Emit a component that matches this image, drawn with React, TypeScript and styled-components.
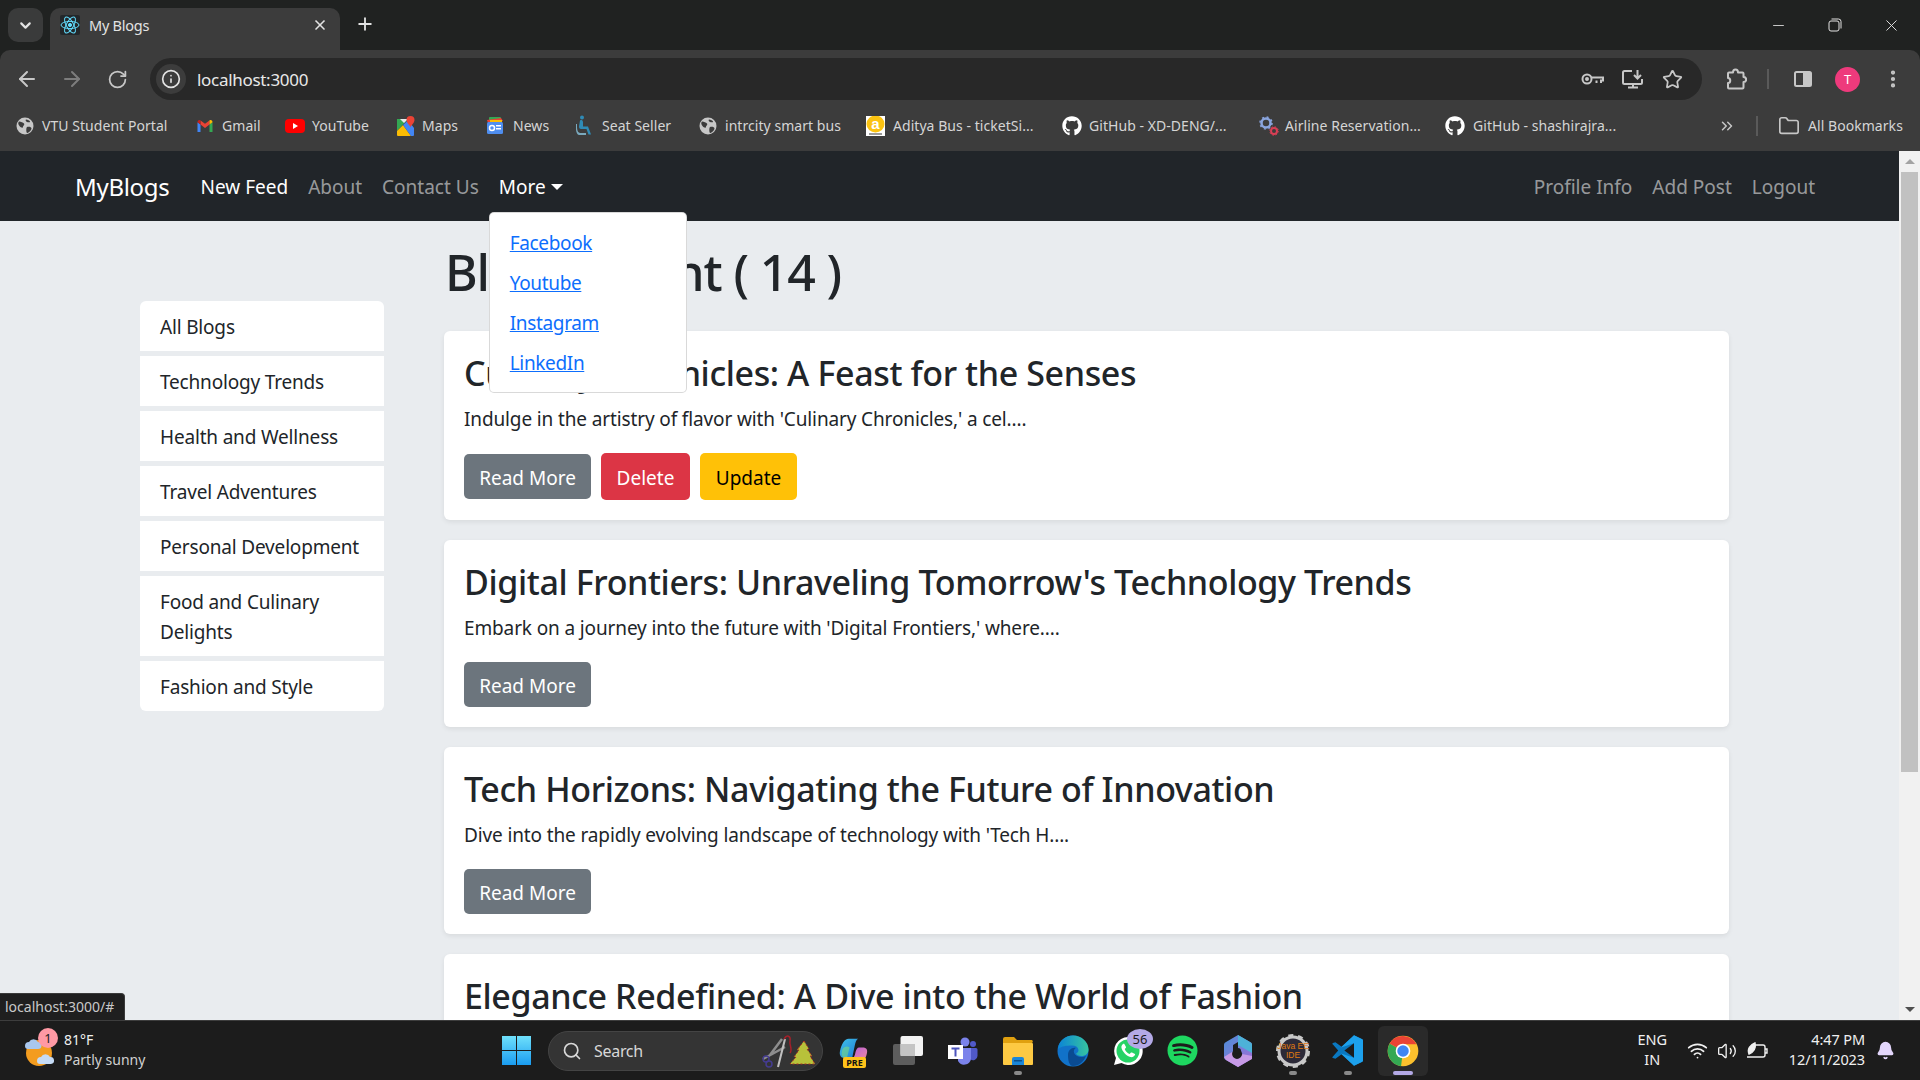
import React from "react";
import styled, { createGlobalStyle } from "styled-components";
import { ArrowLeft, ArrowRight, RotateCw, Info, Star, MoreVertical, ChevronDown, X, Plus, ChevronsRight, Folder, Search, Minus, Wifi, Volume2, Bell } from "lucide-react";
import { FaGithub, FaSpotify } from "react-icons/fa";

const SANS = `"Noto Sans", "Open Sans", sans-serif`;

const Global = createGlobalStyle`
  html, body { margin: 0; padding: 0; height: 100%; overflow: hidden; background: #e9ecef; }
  * { box-sizing: border-box; }
  body { font-family: ${SANS}; }
`;

const Screen = styled.div`
  width: 1920px; height: 1080px; display: flex; flex-direction: column; overflow: hidden; position: relative;
`;

/* ---------- browser chrome ---------- */
const TabStrip = styled.div`
  height: 50px; background: #202221; display: flex; align-items: flex-end; padding-left: 8px; color: #e3e3e3; flex: none;
`;
const TabSearch = styled.div`
  width: 35px; height: 34px; margin-bottom: 8px; border-radius: 10px; background: #3a3b3b; display: flex; align-items: center; justify-content: center; color: #e3e3e3;
`;
const Tab = styled.div`
  width: 290px; height: 42px; margin-left: 7px; background: #3c3c3c; border-radius: 10px 10px 0 0; display: flex; align-items: center; padding: 0 12px 8px 10px; gap: 9px;
`;
const Favicon = styled.div`
  width: 20px; height: 20px; background: #23272a; border-radius: 2px; display: flex; align-items: center; justify-content: center;
`;
const TabTitle = styled.span`
  font-size: 14.5px; letter-spacing: -0.25px; flex: 1; color: #e3e3e3;
`;
const NewTab = styled.div`
  margin: 0 0 16px 15px; width: 20px; height: 20px; display: flex; align-items: center; justify-content: center;
`;
const WindowControls = styled.div`
  margin-left: auto; display: flex; align-self: stretch; align-items: center; padding-right: 1px;
`;
const WindowButton = styled.div<{ $w: number }>`
  width: ${(p) => p.$w}px; height: 24px; display: flex; align-items: center; justify-content: center; color: #e3e3e3;
`;

const Toolbar = styled.div`
  height: 50px; background: #3c3c3c; display: flex; align-items: flex-end; position: relative; flex: none; border-radius: 10px 10px 0 0;
`;
const ToolbarWrap = styled.div`
  background: #202221; flex: none;
`;
const NavIcons = styled.div`
  display: flex; width: 150px; height: 42px; align-items: center; padding-left: 15px; gap: 21px; color: #c7c7c7;
`;
const Reload = styled(RotateCw)`
  margin-left: 2px;
`;
const AddressBar = styled.div`
  width: 1552px; height: 42px; border-radius: 21px; background: #282828; display: flex; align-items: center; padding: 0 19px 0 6px; color: #e3e3e3;
`;
const SiteInfo = styled.div`
  width: 30px; height: 30px; border-radius: 50%; background: #3c3c3c; display: flex; align-items: center; justify-content: center; margin-right: 11px;
`;
const Url = styled.span`
  font-size: 17px; letter-spacing: -0.3px; flex: 1; color: #e8e8e8;
`;
const AddressIcons = styled.div`
  display: flex; align-items: center; gap: 18px; color: #c7c7c7;
`;
const ToolIcons = styled.div`
  display: flex; height: 42px; align-items: center; color: #c7c7c7; padding-left: 23px;
`;
const Divider = styled.div`
  width: 2px; height: 20px; background: #5a5a5a; margin: 0 25px 0 20px;
`;
const Avatar = styled.div`
  width: 25px; height: 25px; border-radius: 50%; background: #ee3a7c; color: #fff; font-size: 13px; display: flex; align-items: center; justify-content: center; margin: 0 22px 0 23px;
`;

const Bookmarks = styled.div`
  height: 51px; background: #3c3c3c; display: flex; align-items: center; padding-left: 16px; flex: none; color: #d5d5d5;
`;
const Bookmark = styled.div<{ $w: number; $gap?: number }>`
  width: ${(p) => p.$w}px; display: flex; align-items: center; gap: ${(p) => p.$gap ?? 6}px; font-size: 14px; letter-spacing: 0.05px; white-space: nowrap; flex: none; color: #d5d5d5;
`;
const BookmarkEnd = styled.div`
  margin-left: auto; display: flex; align-items: center; padding-right: 16px; color: #c7c7c7;
`;
const BookmarkDivider = styled.div`
  width: 2px; height: 20px; background: #5a5a5a; margin: 0 20px 0 20px;
`;
const BookmarkFolder = styled(Folder)`
  margin-right: 8px;
`;

/* ---------- page ---------- */
const Viewport = styled.div`
  flex: 1; display: flex; min-height: 0; position: relative;
`;
const Page = styled.div`
  flex: 1; min-width: 0; overflow: hidden; background: #e9ecef; color: #212529;
`;
const Navbar = styled.nav`
  height: 70px; background: #212529; display: flex; align-items: center; padding: 0 74px 0 75px;
`;
const Brand = styled.a`
  font-size: 24px; color: #fff; margin-right: 21px; letter-spacing: -0.3px;
`;
const NavLink = styled.a<{ $active?: boolean }>`
  font-size: 19px; padding: 2px 10px 0; color: ${(p) => (p.$active ? "#fff" : "rgba(255,255,255,.55)")}; white-space: nowrap; display: flex; align-items: center;
`;
const NavRight = styled.div`
  margin-left: auto; display: flex;
`;
const NavDropdown = styled.div`
  position: relative;
`;
const Caret = styled.span`
  display: inline-block; margin-left: 5px; border-top: 6px solid #fff; border-left: 6px solid transparent; border-right: 6px solid transparent;
`;
const Menu = styled.ul`
  position: absolute; top: 40px; left: 0; width: 198px; height: 181px; margin: 0; padding: 10px 0; list-style: none; background: #fff; border: 1px solid rgba(0,0,0,.15); border-radius: 5px; z-index: 5;
`;
const MenuItem = styled.li`
  padding: 5px 20px; height: 40px; font-size: 19px; line-height: 30px; letter-spacing: -0.35px;
`;
const MenuLink = styled.a`
  color: #0d6efd; text-decoration: underline;
`;
const Main = styled.main`
  display: flex; align-items: flex-start; padding-left: 140px; gap: 60px;
`;
const Sidebar = styled.ul`
  width: 244px; margin: 80px 0 0; padding: 0; list-style: none; display: flex; flex-direction: column; gap: 5px; flex: none;
`;
const SideItem = styled.li`
  background: #fff; padding: 11px 20px 9px; font-size: 19px; line-height: 30px; letter-spacing: -0.18px; color: #212529;
  &:first-child { border-radius: 6px 6px 0 0; }
  &:last-child { border-radius: 0 0 6px 6px; }
`;
const Content = styled.section`
  width: 1285px; flex: none; display: flex; flex-direction: column; gap: 20px;
`;
const Heading = styled.h1`
  margin: 21px 0 9px 1px; font-size: 50px; line-height: 60px; font-weight: 500; letter-spacing: -1.15px; color: #212529;
`;
const Card = styled.article`
  background: #fff; border-radius: 6px; padding: 20px; box-shadow: 0 2px 5px rgba(0,0,0,.075); flex: none;
`;
const CardTitle = styled.h3`
  margin: 0 0 9px; padding-top: 1px; font-size: 34px; line-height: 42px; font-weight: 500; letter-spacing: -0.38px; color: #212529;
`;
const CardText = styled.p`
  margin: 0 0 19px; padding-top: 1px; font-size: 19px; line-height: 30px; letter-spacing: -0.13px; color: #212529;
`;
const Actions = styled.div`
  display: flex; align-items: center; gap: 10px;
`;
const Button = styled.button<{ $bg: string; $fg: string; $h?: number; $w: number }>`
  height: ${(p) => p.$h ?? 45}px; width: ${(p) => p.$w}px; padding: 2px 0 0; border: 0; border-radius: 5px; background: ${(p) => p.$bg}; color: ${(p) => p.$fg}; font-family: ${SANS}; font-size: 19px;
`;
const Scrollbar = styled.div`
  width: 21px; background: #f1f1f1; display: flex; flex-direction: column; align-items: center; flex: none;
`;
const ScrollArrow = styled.div`
  height: 21px; display: flex; align-items: center; justify-content: center;
`;
const UpTri = styled.span`
  border-left: 5px solid transparent; border-right: 5px solid transparent; border-bottom: 5px solid #a3a3a3;
`;
const DownTri = styled.span`
  border-left: 5px solid transparent; border-right: 5px solid transparent; border-top: 5px solid #505050;
`;
const Thumb = styled.div`
  width: 17px; height: 600px; background: #c1c1c1;
`;
const Track = styled.div`
  flex: 1;
`;
const StatusBubble = styled.div`
  position: absolute; left: 0; bottom: 0; height: 27px; width: 125px; background: #1f1f1f; border: 1px solid #3a3a3a; border-left: 0; border-bottom: 0; border-radius: 0 4px 0 0; color: #c9c9c9; font-size: 14px; padding: 0 0 2px 5px; display: flex; align-items: center; z-index: 6;
`;

/* ---------- taskbar ---------- */
const Taskbar = styled.footer`
  height: 60px; background: #1c1c1c; border-top: 1px solid #3d3d3d; display: flex; align-items: center; color: #f0f0f0; flex: none; position: relative;
`;
const Weather = styled.div`
  width: 502px; display: flex; align-items: center; padding-left: 24px; gap: 4px; flex: none;
`;
const WeatherIcon = styled.div`
  width: 36px; height: 40px; position: relative; flex: none;
`;
const WeatherBadge = styled.span`
  position: absolute; left: 14px; top: -3px; width: 20px; height: 20px; border-radius: 50%; background: #ff99a4; color: #222; font-size: 13px; display: flex; align-items: center; justify-content: center;
`;
const WeatherText = styled.div`
  font-size: 14px; line-height: 20px; margin-top: -2px;
`;
const WeatherSub = styled.div`
  color: #d0d0d0;
`;
const StartButton = styled.div`
  width: 46px; display: flex; flex: none;
`;
const SearchBox = styled.div`
  width: 275px; height: 40px; border-radius: 20px; background: #343434; border: 1px solid #444; display: flex; align-items: center; padding-left: 13px; gap: 12px; font-size: 16px; letter-spacing: -0.3px; color: #d8d8d8; flex: none; position: relative; overflow: hidden; margin-right: 2px;
`;
const SearchArt = styled.div`
  position: absolute; right: 4px; top: 1px; width: 58px; height: 38px;
`;
const IconSlot = styled.div<{ $active?: boolean }>`
  width: ${(p) => (p.$active ? 50 : 55)}px; margin-left: ${(p) => (p.$active ? 2.5 : 0)}px; height: 50px; display: flex; align-items: center; justify-content: center; position: relative; flex: none; border-radius: 6px;
  background: ${(p) => (p.$active ? "#2a2a2a" : "transparent")};
`;
const Indicator = styled.span<{ $active?: boolean }>`
  position: absolute; bottom: 1px; left: 50%; transform: translateX(-50%); height: 4px; border-radius: 2px; width: ${(p) => (p.$active ? 20 : 8)}px; background: ${(p) => (p.$active ? "#b4a9e6" : "#8a8a8a")};
`;
const PreBadge = styled.span`
  position: absolute; left: 18px; top: 31px; width: 23px; height: 11px; background: #ffc21a; border-radius: 2px; color: #111; font-size: 9px; font-weight: 700; line-height: 11px; text-align: center;
`;
const CountBadge = styled.span`
  position: absolute; right: 2px; top: 3px; width: 26px; height: 20px; border-radius: 50%; background: #b4a9e6; color: #1a1a1a; font-size: 13px; display: flex; align-items: center; justify-content: center;
`;
const Tray = styled.div`
  margin-left: auto; display: flex; align-items: center; padding-right: 25px; font-size: 14.5px; line-height: 20px;
`;
const TrayText = styled.div`
  text-align: center; margin: -3px 20px 0 0; letter-spacing: -0.1px;
`;
const TrayIcons = styled.div`
  display: flex; align-items: center; gap: 9px; margin-right: 21px;
`;
const Clock = styled.div`
  text-align: right; margin: -3px 11px 0 0; letter-spacing: -0.1px;
`;

/* ---------- drawings ---------- */
const Globe = () => (
  <svg width="18" height="18" viewBox="0 0 18 18"><circle cx="9" cy="9" r="8.5" fill="#c7c7c7" /><path d="M3 4.5c2 .5 4 .5 5 2s-1 2-1 3.5-2.5.5-3.5-1S1.500 6 3 4.500zM11 10c2-.5 4.500 0 4.500 1.500S13 15.500 11.500 16 10 11 11 10zM10 2.500c2 0 3.500 1 4 2s-2 1-3 .5-2-2-1-2.500z" fill="#3c3c3c" /></svg>
);
const Gmail = () => (
  <svg width="20" height="18" viewBox="0 0 24 24"><path d="M2 20V7l4 3v10z" fill="#4285f4" /><path d="M22 20V7l-4 3v10z" fill="#34a853" /><path d="M6 10V4.500l6 4.500 6-4.500V10l-6 4.500z" fill="#ea4335" /><path d="M2 7c0-2.500 2.500-3.500 4-2.500V10z" fill="#c5221f" /><path d="M22 7c0-2.500-2.500-3.500-4-2.500V10z" fill="#fbbc04" /></svg>
);
const YouTube = () => (
  <svg width="20" height="18" viewBox="0 0 20 18"><rect y="2" width="20" height="14" rx="4" fill="#f00" /><path d="M8 6l5 3-5 3z" fill="#fff" /></svg>
);
const Maps = () => (
  <svg width="18" height="20" viewBox="0 0 18 20"><path d="M0 3h11L0 15z" fill="#34a853" /><path d="M0 15L6 9l8 11H1a1 1 0 0 1-1-1z" fill="#fbbc04" /><path d="M6 9l5-5 6 8v7a1 1 0 0 1-1 1h-2z" fill="#4285f4" /><path d="M3 3h8L7 7z" fill="#e8eaed" /><path d="M13.500 0a4 4 0 0 1 4 4c0 3-4 6-4 7.500 0-1.500-4-4.500-4-7.500a4 4 0 0 1 4-4z" fill="#ea4335" /></svg>
);
const News = () => (
  <svg width="18" height="18" viewBox="0 0 18 18"><rect x="3" y="0" width="12" height="8" rx="1" fill="#34a853" /><path d="M1 3l14-2 2 3-15 2z" fill="#ea4335" /><path d="M4 3h12v4H4z" fill="#fbbc04" /><rect x="1" y="5" width="16" height="12" rx="1.500" fill="#4f8ef0" /><rect x="10" y="8" width="5" height="1.500" fill="#fff" /><rect x="10" y="11" width="5" height="1.500" fill="#fff" /><circle cx="6" cy="11" r="2.500" fill="none" stroke="#fff" strokeWidth="1.500" /></svg>
);
const SeatSeller = () => (
  <svg width="18" height="22" viewBox="0 0 18 22"><circle cx="6" cy="2.500" r="2" fill="#2f8bb6" /><path d="M4 5.500c2-1 3 0 3 2v4h5l3 8h-2.500l-2-5.500H5c-1.500 0-2-1-2-2.500z" fill="#2f8bb6" /><path d="M1 9c0 5 0 8 3 9h6v2H3C0 19-.5 14 0 9z" fill="#7aa9bd" /></svg>
);
const Aditya = () => (
  <svg width="19" height="20" viewBox="0 0 19 20"><rect width="19" height="20" fill="#fff" /><ellipse cx="9.500" cy="8" rx="9" ry="8.500" fill="#fbc312" /><text x="9.500" y="13" fontSize="15" fontWeight="700" textAnchor="middle" fill="#fff" fontFamily="Liberation Sans, sans-serif">a</text><rect x="3" y="17" width="13" height="2" fill="#999" /></svg>
);
const Gears = () => (
  <svg width="20" height="20" viewBox="0 0 20 20"><circle cx="7" cy="7" r="4.500" fill="none" stroke="#8aa5de" strokeWidth="2.500" /><circle cx="7" cy="7" r="6" fill="none" stroke="#8aa5de" strokeWidth="1.500" strokeDasharray="2 2.700" /><circle cx="15" cy="15" r="3" fill="none" stroke="#d93f55" strokeWidth="2" /><circle cx="15" cy="15" r="4.300" fill="none" stroke="#d93f55" strokeWidth="1" strokeDasharray="1.500 1.900" /></svg>
);
const Atom = () => (
  <svg width="20" height="20" viewBox="0 0 20 20" fill="none" stroke="#61dafb" strokeWidth="1"><ellipse cx="10" cy="10" rx="9" ry="3.600" /><ellipse cx="10" cy="10" rx="9" ry="3.600" transform="rotate(60 10 10)" /><ellipse cx="10" cy="10" rx="9" ry="3.600" transform="rotate(120 10 10)" /><circle cx="10" cy="10" r="1.600" fill="#61dafb" /></svg>
);
const KeyIcon = () => (
  <svg width="24" height="20" viewBox="0 0 24 20" fill="none" stroke="currentColor" strokeWidth="2"><circle cx="7" cy="10" r="4.500" /><circle cx="7" cy="10" r="1" fill="currentColor" /><path d="M11.500 8.500H23v3h-2v2.500M16.500 11.500V14" /></svg>
);
const InstallIcon = () => (
  <svg width="22" height="20" viewBox="0 0 22 20" fill="none" stroke="currentColor" strokeWidth="2"><path d="M10 2H2.500A1.500 1.500 0 0 0 1 3.500v10A1.500 1.500 0 0 0 2.500 15h16a1.500 1.500 0 0 0 1.500-1.500V10M6 18.500h10M11 15v3" /><path d="M15.500 1v8M12 6l3.500 3.500L19 6" /></svg>
);
const PuzzleIcon = () => (
  <svg width="22" height="22" viewBox="0 0 22 22" fill="none" stroke="currentColor" strokeWidth="2" strokeLinejoin="round"><path d="M8 4.500c0-4 5-4 5 0h4.500a1 1 0 0 1 1 1V9c3.500 0 3.500 5 0 5v5.500a1 1 0 0 1-1 1H4a1 1 0 0 1-1-1V15c3 0 3-5 0-5V5.500a1 1 0 0 1 1-1z" /></svg>
);
const SidePanel = () => (
  <svg width="18" height="18" viewBox="0 0 18 18"><rect x="1" y="2" width="16" height="14" rx="1.500" fill="none" stroke="currentColor" strokeWidth="2" /><rect x="9" y="2" width="8" height="14" fill="currentColor" /></svg>
);
const Restore = () => (
  <svg width="14" height="14" viewBox="0 0 14 14" fill="none" stroke="currentColor" strokeWidth="1"><rect x="1" y="3" width="10" height="10" rx="2" /><path d="M3.500 1h7A2.500 2.500 0 0 1 13 3.500v7" /></svg>
);
const WindowsLogo = () => (
  <svg width="29" height="29" viewBox="0 0 29 29"><defs><linearGradient id="win" x1="0" y1="0" x2="0" y2="1"><stop offset="0" stopColor="#6fe0fb" /><stop offset="1" stopColor="#1a9cf0" /></linearGradient></defs><path d="M0 0h14v14H0zM15 0h14v14H15zM0 15h14v14H0zM15 15h14v14H15z" fill="url(#win)" /></svg>
);
const Copilot = () => (
  <svg width="30" height="26" viewBox="0 0 34 30"><defs><linearGradient id="cpa" x1="0" y1="0" x2="1" y2="1"><stop offset="0" stopColor="#3fc1e8" /><stop offset="1" stopColor="#1f7bd6" /></linearGradient><linearGradient id="cpb" x1="0" y1="0" x2="1" y2="1"><stop offset="0" stopColor="#b25be0" /><stop offset="1" stopColor="#f08a9c" /></linearGradient></defs><path d="M12 1h11c-2 1-3 3-4 8l-3 14H7C3 23 1 20 2 15 4 7 7 1 12 1z" fill="url(#cpa)" /><path d="M15 24c3 0 4-3 5-8 1-3 2-5 4-5h4c5 0 6 3 5 7-1 5-3 8-8 8H12z" fill="url(#cpb)" /><path d="M5 13c2-4 6-4 8-2l-3 12H7c-3 0-4-5-2-10z" fill="#7fe07a" opacity=".55" /></svg>
);
const TaskView = () => (
  <svg width="32" height="32" viewBox="0 0 32 32"><rect x="1" y="9" width="22" height="21" rx="2" fill="#5d5d5d" /><rect x="8.500" y="1" width="22.500" height="20" rx="2" fill="#f2f2f2" /><rect x="8.500" y="9" width="14.500" height="12" fill="#c4c4c4" /></svg>
);
const Teams = () => (
  <svg width="30" height="30" viewBox="0 0 30 30"><circle cx="17" cy="6" r="4.500" fill="#7b83eb" /><circle cx="25" cy="8" r="3" fill="#5059c9" /><path d="M20 12h8a1.500 1.500 0 0 1 1.500 1.500V20a4.500 4.500 0 0 1-7 3.500z" fill="#5059c9" /><path d="M10 12h13v11a7 7 0 0 1-13 2z" fill="#7b83eb" /><rect x="0" y="9" width="15" height="14" fill="#fff" /><path d="M3.500 11.500h8v2H8.500v7h-2v-7h-3z" fill="#4b53bc" /></svg>
);
const Explorer = () => (
  <svg width="32" height="30" viewBox="0 0 32 30"><path d="M1 3a2 2 0 0 1 2-2h9l3 3h15a2 2 0 0 1 0 3H1z" fill="#e0a00f" /><path d="M1 7h29a1 1 0 0 1 1 1v20a1 1 0 0 1-1 1H2a1 1 0 0 1-1-1z" fill="#fdc943" /><path d="M10 29v-6a2 2 0 0 1 2-2h8a2 2 0 0 1 2 2v6z" fill="#1a86d8" /><rect x="12" y="24" width="8" height="1.500" fill="#0a4f8c" /></svg>
);
const Edge = () => (
  <svg width="32" height="32" viewBox="0 0 32 32"><defs><linearGradient id="eda" x1="0" y1="0" x2="1" y2="0"><stop offset="0" stopColor="#0b84d6" /><stop offset="1" stopColor="#36c5a0" /></linearGradient></defs><circle cx="16" cy="16" r="15.500" fill="#1172c9" /><path d="M1 14C2 5 9 .5 16 .5c9 0 15.500 7 15.500 14 0 4-3 6.500-7 6.500-3 0-5-1-5.500-2.500 4-1 3.500-8-4-8C9 10.500 5 11 1 14z" fill="url(#eda)" /><path d="M11 20c0-5 4-8 8-7-3 1-3 6 1 8 3.500 2 7 1 9-.5-2 6-7 10.500-13 10.500-4 0-5-6-5-11z" fill="#0a4b92" /></svg>
);
const WhatsApp = () => (
  <svg width="32" height="32" viewBox="0 0 32 32"><path d="M16 2a14 14 0 0 0-12 21L2 30l7.500-2A14 14 0 1 0 16 2z" fill="#fff" /><circle cx="16" cy="16" r="11.500" fill="#25d366" /><path d="M11 9c-1 1-2 2-1.500 4 .8 3.500 5 8 9 9 2 .5 3.500-.5 4.500-2 .3-.5 0-1-.5-1.300l-2.500-1.200c-.5-.2-1-.1-1.300.3l-1 1.200c-2.500-1-4-2.500-5-5l1-1c.4-.4.4-.8.2-1.300L12.500 9.200C12.200 8.700 11.500 8.600 11 9z" fill="#fff" /></svg>
);
const Msft = () => (
  <svg width="28" height="32" viewBox="0 0 28 32"><defs><linearGradient id="msa" x1="0" y1="0" x2="1" y2="1"><stop offset="0" stopColor="#4a8fd8" /><stop offset="1" stopColor="#a56bd8" /></linearGradient></defs><path d="M14 0l12 7a3 3 0 0 1 2 3v12a3 3 0 0 1-2 3l-12 7L2 25a3 3 0 0 1-2-3V10a3 3 0 0 1 2-3z" fill="url(#msa)" /><path d="M14 0l12 7a3 3 0 0 1 2 3v8L14 10z" fill="#4db2d8" /><path d="M0 22l8-5 20 4a3 3 0 0 1-2 4l-12 7L2 25z" fill="#c79ae6" /><path d="M9 10l5-3v7a5 5 0 1 1-5 2z" fill="#1c1c1c" /><circle cx="14" cy="16" r="3" fill="#1c1c1c" /></svg>
);
const JavaGear = () => (
  <svg width="34" height="34" viewBox="0 0 34 34"><circle cx="17" cy="17" r="14" fill="#2c2a38" stroke="#c8c8c8" strokeWidth="3" /><circle cx="17" cy="17" r="15.500" fill="none" stroke="#c8c8c8" strokeWidth="3" strokeDasharray="5 4.700" /><text x="17" y="15" fontSize="8.500" textAnchor="middle" fill="#e07a10" fontFamily="Liberation Sans, sans-serif">Java EE</text><text x="17" y="24" fontSize="8.500" textAnchor="middle" fill="#e07a10" fontFamily="Liberation Sans, sans-serif">IDE</text></svg>
);
const VSCode = () => (
  <svg width="31" height="31" viewBox="0 0 100 100"><path d="M71 99l25-12a6 6 0 0 0 4-6V19a6 6 0 0 0-4-6L71 1 31 38 11 23l-8 3a3 3 0 0 0 0 5l17 19L3 69a3 3 0 0 0 0 5l8 3 20-15z" fill="#0a78c0" /><path d="M71 1l25 12a6 6 0 0 1 4 6v62a6 6 0 0 1-4 6L71 99 31 62l-2-2 42 13V27L29 40l2-2z" fill="#1da1ec" /><path d="M71 27L40 50l31 23z" fill="#1c1c1c" /></svg>
);
const Chrome = () => (
  <svg width="32" height="32" viewBox="0 0 24 24"><circle cx="12" cy="12" r="11.500" fill="#fbc02d" /><path d="M12 12L2 6.300A11.500 11.500 0 0 0 10.500 23.400z" fill="#34a853" /><path d="M12 7H22A11.500 11.500 0 0 0 2 6.300L12 12z" fill="#ea4335" /><circle cx="12" cy="12" r="5.500" fill="#fff" /><circle cx="12" cy="12" r="4.300" fill="#3f85f4" /></svg>
);
const SunCloud = () => (
  <svg width="36" height="40" viewBox="0 0 36 40"><circle cx="15" cy="22" r="13" fill="#f39c1f" /><path d="M1 15a4 4 0 0 1 4-4 5 5 0 0 1 9 0 3.500 3.500 0 0 1 0 7H4a3 3 0 0 1-3-3z" fill="#a9c7ee" /><path d="M13 30a4 4 0 0 1 4-4 5 5 0 0 1 9 0 3.500 3.500 0 0 1 1 7H16a3 3 0 0 1-3-3z" fill="#c5dbf5" /></svg>
);
const SearchArtwork = () => (
  <svg width="58" height="38" viewBox="0 0 58 38"><path d="M3 26l22-12M22 6L10 22" stroke="#8d8d8d" strokeWidth="2.500" fill="none" /><circle cx="6" cy="26" r="3" fill="none" stroke="#443c90" strokeWidth="1.500" /><circle cx="9" cy="31" r="3" fill="none" stroke="#443c90" strokeWidth="1.500" /><path d="M18 34l7-28" stroke="#c0c0c0" strokeWidth="2" /><path d="M24 6c3-5 7-3 6 2-1 4 3 8 0 12" stroke="#a3202a" strokeWidth="1.500" fill="none" /><path d="M44 8l5 8-2 0 5 7-2 0 5 8H30l6-7h-2l5-7h-2z" fill="#b8c23a" stroke="#b03020" strokeWidth="1" strokeDasharray="2 2" /></svg>
);
const BatteryLeaf = () => (
  <svg width="22" height="18" viewBox="0 0 22 18" fill="none" stroke="#f0f0f0" strokeWidth="1.400"><path d="M9 3h8a2 2 0 0 1 2 2v8a2 2 0 0 1-2 2H1" /><path d="M19 7h2v4h-2" /><path d="M3 12C1 7 4 3 9 1c1 5-1 9-6 11z" fill="#f0f0f0" /></svg>
);

const bookmarks: { label: string; w: number; gap?: number; icon: React.ReactNode }[] = [
  { label: "VTU Student Portal", w: 179, gap: 8, icon: <Globe /> },
  { label: "Gmail", w: 90, gap: 7, icon: <Gmail /> },
  { label: "YouTube", w: 112, gap: 7, icon: <YouTube /> },
  { label: "Maps", w: 89, gap: 7, icon: <Maps /> },
  { label: "News", w: 90, gap: 9, icon: <News /> },
  { label: "Seat Seller", w: 123, gap: 8, icon: <SeatSeller /> },
  { label: "intrcity smart bus", w: 167, gap: 8, icon: <Globe /> },
  { label: "Aditya Bus - ticketSi...", w: 196, gap: 8, icon: <Aditya /> },
  { label: "GitHub - XD-DENG/...", w: 197, gap: 7, icon: <FaGithub size={20} color="#fff" /> },
  { label: "Airline Reservation...", w: 186, gap: 6, icon: <Gears /> },
  { label: "GitHub - shashirajra...", w: 200, gap: 8, icon: <FaGithub size={20} color="#fff" /> },
];

const posts: { title: string; text?: string; owner?: boolean }[] = [
  { title: "Culinary Chronicles: A Feast for the Senses", text: "Indulge in the artistry of flavor with 'Culinary Chronicles,' a cel....", owner: true },
  { title: "Digital Frontiers: Unraveling Tomorrow's Technology Trends", text: "Embark on a journey into the future with 'Digital Frontiers,' where...." },
  { title: "Tech Horizons: Navigating the Future of Innovation", text: "Dive into the rapidly evolving landscape of technology with 'Tech H...." },
  { title: "Elegance Redefined: A Dive into the World of Fashion" },
];

const categories = ["All Blogs", "Technology Trends", "Health and Wellness", "Travel Adventures", "Personal Development", "Food and Culinary Delights", "Fashion and Style"];

export default function App() {
  return (
    <Screen>
      <Global />
      <TabStrip>
        <TabSearch><ChevronDown size={17} strokeWidth={3} /></TabSearch>
        <Tab>
          <Favicon><Atom /></Favicon>
          <TabTitle>My Blogs</TabTitle>
          <X size={16} strokeWidth={2.5} />
        </Tab>
        <NewTab><Plus size={20} strokeWidth={2.2} /></NewTab>
        <WindowControls>
          <WindowButton $w={57}><Minus size={17} strokeWidth={1.2} /></WindowButton>
          <WindowButton $w={56}><Restore /></WindowButton>
          <WindowButton $w={56}><X size={19} strokeWidth={1.2} /></WindowButton>
        </WindowControls>
      </TabStrip>
      <ToolbarWrap>
        <Toolbar>
          <NavIcons>
            <ArrowLeft size={24} strokeWidth={2} />
            <ArrowRight size={24} strokeWidth={2} color="#7d7d7d" />
            <Reload size={21} strokeWidth={2} />
          </NavIcons>
          <AddressBar>
            <SiteInfo><Info size={20} strokeWidth={2} /></SiteInfo>
            <Url>localhost:3000</Url>
            <AddressIcons>
              <KeyIcon />
              <InstallIcon />
              <Star size={21} strokeWidth={2} />
            </AddressIcons>
          </AddressBar>
          <ToolIcons>
            <PuzzleIcon />
            <Divider />
            <SidePanel />
            <Avatar>T</Avatar>
            <MoreVertical size={22} strokeWidth={2.6} />
          </ToolIcons>
        </Toolbar>
      </ToolbarWrap>
      <Bookmarks>
        {bookmarks.map((b) => (
          <Bookmark key={b.label} $w={b.w} $gap={b.gap}>{b.icon}{b.label}</Bookmark>
        ))}
        <BookmarkEnd>
          <ChevronsRight size={18} strokeWidth={2} />
          <BookmarkDivider />
          <BookmarkFolder size={22} strokeWidth={1.8} />
          <Bookmark $w={96} $gap={0}>All Bookmarks</Bookmark>
        </BookmarkEnd>
      </Bookmarks>

      <Viewport>
        <Page>
          <Navbar>
            <Brand>MyBlogs</Brand>
            <NavLink $active>New Feed</NavLink>
            <NavLink>About</NavLink>
            <NavLink>Contact Us</NavLink>
            <NavDropdown>
              <NavLink $active>More<Caret /></NavLink>
              <Menu>
                {["Facebook", "Youtube", "Instagram", "LinkedIn"].map((m) => (
                  <MenuItem key={m}><MenuLink href="#">{m}</MenuLink></MenuItem>
                ))}
              </Menu>
            </NavDropdown>
            <NavRight>
              <NavLink>Profile Info</NavLink>
              <NavLink>Add Post</NavLink>
              <NavLink>Logout</NavLink>
            </NavRight>
          </Navbar>
          <Main>
            <Sidebar>
              {categories.map((c) => <SideItem key={c}>{c}</SideItem>)}
            </Sidebar>
            <Content>
              <Heading>Blogs Count ( 14 )</Heading>
              {posts.map((p) => (
                <Card key={p.title}>
                  <CardTitle>{p.title}</CardTitle>
                  {p.text && <CardText>{p.text}</CardText>}
                  {p.text && (
                    <Actions>
                      <Button $bg="#6c757d" $fg="#fff" $w={127}>Read More</Button>
                      {p.owner && <Button $bg="#dc3545" $fg="#fff" $h={47} $w={89}>Delete</Button>}
                      {p.owner && <Button $bg="#ffc107" $fg="#000" $h={47} $w={97}>Update</Button>}
                    </Actions>
                  )}
                </Card>
              ))}
            </Content>
          </Main>
        </Page>
        <Scrollbar>
          <ScrollArrow><UpTri /></ScrollArrow>
          <Thumb />
          <Track />
          <ScrollArrow><DownTri /></ScrollArrow>
        </Scrollbar>
        <StatusBubble>localhost:3000/#</StatusBubble>
      </Viewport>

      <Taskbar>
        <Weather>
          <WeatherIcon><SunCloud /><WeatherBadge>1</WeatherBadge></WeatherIcon>
          <WeatherText>81°F<WeatherSub>Partly sunny</WeatherSub></WeatherText>
        </Weather>
        <StartButton><WindowsLogo /></StartButton>
        <SearchBox>
          <Search size={20} strokeWidth={2} />Search
          <SearchArt><SearchArtwork /></SearchArt>
        </SearchBox>
        <IconSlot><Copilot /><PreBadge>PRE</PreBadge></IconSlot>
        <IconSlot><TaskView /></IconSlot>
        <IconSlot><Teams /></IconSlot>
        <IconSlot><Explorer /><Indicator /></IconSlot>
        <IconSlot><Edge /></IconSlot>
        <IconSlot><WhatsApp /><CountBadge>56</CountBadge></IconSlot>
        <IconSlot><FaSpotify size={31} color="#1ed760" /></IconSlot>
        <IconSlot><Msft /></IconSlot>
        <IconSlot><JavaGear /><Indicator /></IconSlot>
        <IconSlot><VSCode /><Indicator /></IconSlot>
        <IconSlot $active><Chrome /><Indicator $active /></IconSlot>
        <Tray>
          <TrayText>ENG<br />IN</TrayText>
          <TrayIcons>
            <Wifi size={21} strokeWidth={2} />
            <Volume2 size={20} strokeWidth={1.6} />
            <BatteryLeaf />
          </TrayIcons>
          <Clock>4:47 PM<br />12/11/2023</Clock>
          <Bell size={19} fill="#e3d6fb" color="#e3d6fb" />
        </Tray>
      </Taskbar>
    </Screen>
  );
}
